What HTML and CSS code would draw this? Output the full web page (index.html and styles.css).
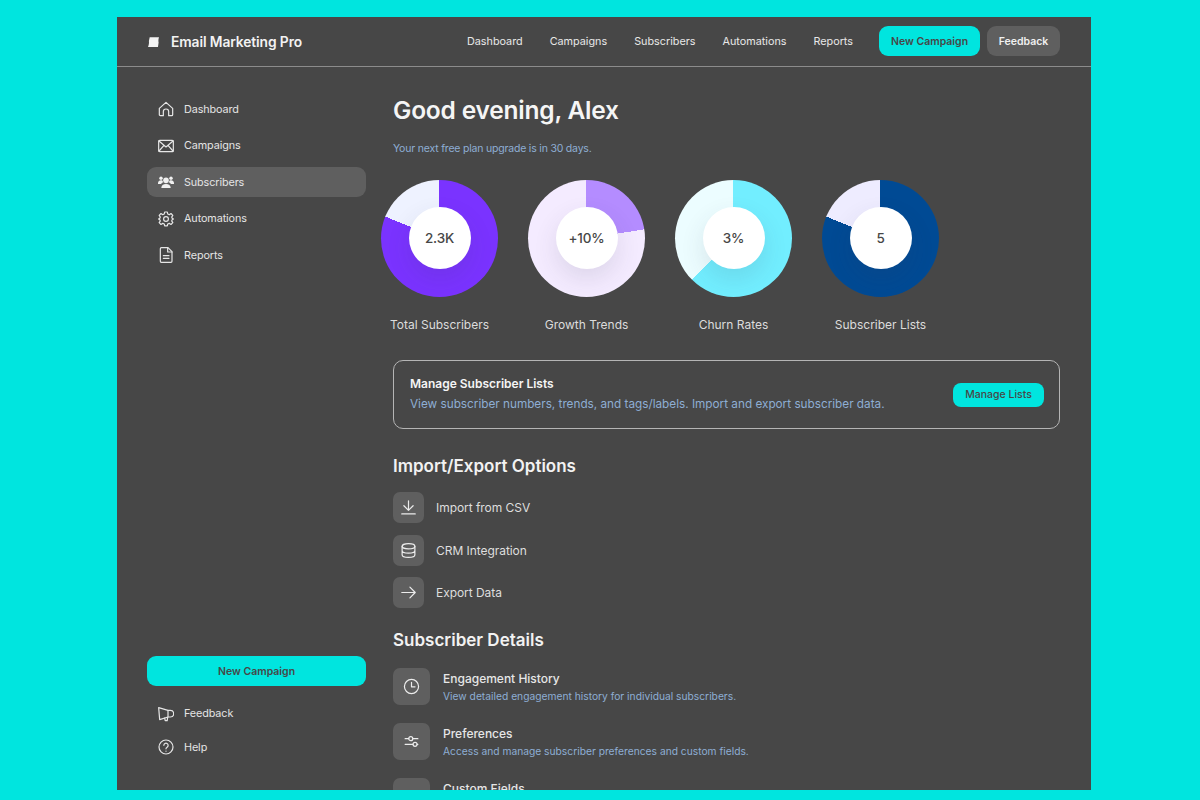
FILE: index.html
```html
<!DOCTYPE html>
<html lang="en">
<head>
<meta charset="utf-8">
<title>Email Marketing Pro</title>
<link rel="stylesheet" href="styles.css">
</head>
<body>
<div class="app">
  <header class="topbar">
    <div class="brand">
      <svg class="brand-mark" viewBox="0 0 11 10"><path d="M1.700.2H11C10.300 2 10.300 4 10.600 5.500L10 10H0C.8 8 1.200 6 .9 4z" fill="#f4f4f4"/></svg>
      <span class="brand-name">Email Marketing Pro</span>
    </div>
    <nav class="topnav">
      <a class="topnav-link">Dashboard</a>
      <a class="topnav-link">Campaigns</a>
      <a class="topnav-link">Subscribers</a>
      <a class="topnav-link">Automations</a>
      <a class="topnav-link">Reports</a>
    </nav>
    <div class="top-actions">
      <button class="btn btn-primary btn-top">New Campaign</button>
      <button class="btn btn-muted btn-top">Feedback</button>
    </div>
  </header>
  <div class="layout">
    <aside class="sidebar">
      <nav class="side-nav">
        <a class="side-link">
          <svg class="side-icon" viewBox="0 0 24 24"><path d="M2 11 12 2l10 9v9.500A1.500 1.500 0 0 1 20.500 22H16v-6a4 4 0 0 0-8 0v6H3.500A1.500 1.500 0 0 1 2 20.500z"/></svg>
          <span>Dashboard</span>
        </a>
        <a class="side-link">
          <svg class="side-icon" viewBox="0 0 24 24"><rect x="1" y="3.500" width="22" height="17" rx="1.500"/><path d="m1.500 4.500 10.500 9 10.500-9M1.500 19.500l7.500-8.500M22.500 19.500 15 11"/></svg>
          <span>Campaigns</span>
        </a>
        <a class="side-link side-link-active">
          <svg class="side-icon side-icon-fill" viewBox="0 0 24 24"><circle cx="12" cy="9.500" r="4.200"/><path d="M5 21c0-4 2.800-6 7-6s7 2 7 6z"/><circle cx="4.500" cy="6.500" r="2.600"/><circle cx="19.500" cy="6.500" r="2.600"/><path d="M0 13.500c0-2.800 2-4.300 4.500-4.300.8 0 1.500.1 2 .4.300 1.200 1 2.200 1.800 2.800-1.500.5-2.800 1.100-3.500 2.600H0zM24 13.500c0-2.800-2-4.300-4.500-4.300-.8 0-1.500.1-2 .4-.3 1.200-1 2.200-1.800 2.800 1.500.5 2.800 1.100 3.500 2.600H24z"/></svg>
          <span>Subscribers</span>
        </a>
        <a class="side-link">
          <svg class="side-icon" viewBox="0 0 24 24"><circle cx="12" cy="12" r="3.600"/><path d="M10 1.500h4l.6 3 2.300 1 2.600-1.700 2.700 2.700L20.500 9.100l1 2.300 2 .6-2 .6-1 2.300 1.700 2.600-2.700 2.700-2.600-1.700-2.300 1-.6 2.800h-4l-.6-2.800-2.300-1-2.600 1.700-2.700-2.700 1.700-2.600-1-2.300-2-.6 2-.6 1-2.300L1.800 6.500l2.700-2.700 2.600 1.700 2.300-1z"/></svg>
          <span>Automations</span>
        </a>
        <a class="side-link">
          <svg class="side-icon" viewBox="0 0 24 24"><path d="M3.500 2.500A1.500 1.500 0 0 1 5 1h10l6 6v14.500a1.500 1.500 0 0 1-1.500 1.500H5a1.500 1.500 0 0 1-1.500-1.500z"/><path d="M14.500 1v6.500H21M8 13h8.500M8 17h8.500"/></svg>
          <span>Reports</span>
        </a>
      </nav>
      <div class="side-bottom">
        <button class="btn btn-primary btn-side">New Campaign</button>
        <div class="side-help">
          <a class="side-link">
            <svg class="side-icon" viewBox="0 0 24 24"><path d="M1 2.500 15 6.500h3.500a5 5 0 0 1 0 10H15L2.500 20.500z"/><path d="M15 6.500v10M10 18l.8 4h3l.7-5"/></svg>
            <span>Feedback</span>
          </a>
          <a class="side-link">
            <svg class="side-icon" viewBox="0 0 24 24"><circle cx="12" cy="12" r="10.500"/><path d="M8.800 9.500a3.200 3.200 0 1 1 4.900 2.700c-1.100.7-1.700 1.300-1.700 2.600M12 18v.3"/></svg>
            <span>Help</span>
          </a>
        </div>
      </div>
    </aside>
    <main class="main">
      <h1 class="greeting">Good evening, Alex</h1>
      <p class="plan-note">Your next free plan upgrade is in 30 days.</p>
      <section class="stats">
        <figure class="stat">
          <div class="donut donut-total"><div class="donut-hole">2.3K</div></div>
          <figcaption class="stat-label">Total Subscribers</figcaption>
        </figure>
        <figure class="stat">
          <div class="donut donut-growth"><div class="donut-hole">+10%</div></div>
          <figcaption class="stat-label">Growth Trends</figcaption>
        </figure>
        <figure class="stat">
          <div class="donut donut-churn"><div class="donut-hole">3%</div></div>
          <figcaption class="stat-label">Churn Rates</figcaption>
        </figure>
        <figure class="stat">
          <div class="donut donut-lists"><div class="donut-hole">5</div></div>
          <figcaption class="stat-label">Subscriber Lists</figcaption>
        </figure>
      </section>
      <section class="manage-card">
        <div class="manage-text">
          <h2 class="manage-title">Manage Subscriber Lists</h2>
          <p class="manage-desc">View subscriber numbers, trends, and tags/labels. Import and export subscriber data.</p>
        </div>
        <button class="btn btn-primary btn-manage">Manage Lists</button>
      </section>
      <h2 class="section-title section-import">Import/Export Options</h2>
      <ul class="option-list">
        <li class="option">
          <span class="icon-box"><svg class="box-icon" viewBox="0 0 24 24"><path d="M12 2.500v13.500M5.500 9.500 12 16l6.500-6.500M2.500 21h19"/></svg></span>
          <span>Import from CSV</span>
        </li>
        <li class="option">
          <span class="icon-box"><svg class="box-icon" viewBox="0 0 24 24"><ellipse cx="12" cy="6" rx="9" ry="3.800"/><path d="M3 6v12c0 2.100 4 3.800 9 3.800s9-1.700 9-3.800V6M3 12c0 2.100 4 3.800 9 3.800s9-1.700 9-3.800"/></svg></span>
          <span>CRM Integration</span>
        </li>
        <li class="option">
          <span class="icon-box"><svg class="box-icon" viewBox="0 0 24 24"><path d="M2.500 12h19M14 4.500l7.500 7.500-7.500 7.500"/></svg></span>
          <span>Export Data</span>
        </li>
      </ul>
      <h2 class="section-title section-details">Subscriber Details</h2>
      <ul class="detail-list">
        <li class="detail">
          <span class="icon-box icon-box-lg"><svg class="box-icon" viewBox="0 0 24 24"><circle cx="12" cy="12" r="10"/><path d="M12 6v6.500h5"/></svg></span>
          <div>
            <h3 class="detail-title">Engagement History</h3>
            <p class="detail-desc">View detailed engagement history for individual subscribers.</p>
          </div>
        </li>
        <li class="detail">
          <span class="icon-box icon-box-lg"><svg class="box-icon" viewBox="0 0 24 24"><path d="M3 8h5M14 8h7M3 16h11M20 16h1"/><circle cx="11" cy="8" r="2.800"/><circle cx="17" cy="16" r="2.800"/></svg></span>
          <div>
            <h3 class="detail-title">Preferences</h3>
            <p class="detail-desc">Access and manage subscriber preferences and custom fields.</p>
          </div>
        </li>
        <li class="detail">
          <span class="icon-box icon-box-lg"></span>
          <div>
            <h3 class="detail-title">Custom Fields</h3>
          </div>
        </li>
      </ul>
    </main>
  </div>
</div>
</body>
</html>
```
FILE: styles.css
```css
* { box-sizing: border-box; }
html, body { height: 100%; }
body {
  margin: 0;
  height: 800px;
  overflow: hidden;
  background: #00e5df;
  padding: 17px 109px 10px 117px;
  font-family: Inter, "Liberation Sans", sans-serif;
  color: #e4e4e4;
}
h1, h2, h3, p, ul, figure { margin: 0; padding: 0; }
ul { list-style: none; }
svg { display: block; flex: none; }

.app {
  height: 773px;
  background: #474747;
  display: flex;
  flex-direction: column;
  overflow: hidden;
}

.topbar {
  height: 50px;
  flex: none;
  display: flex;
  align-items: center;
  padding: 0 31px 1px 31px;
  border-bottom: 1px solid #8c8c8c;
}
.brand { display: flex; align-items: center; gap: 12px; padding-top: 2px; }
.brand-mark { width: 11px; height: 10px; }
.brand-name { font-size: 13.800px; font-weight: 600; color: #f2f2f2; letter-spacing: -0.1px; }
.topnav { margin-left: auto; display: flex; gap: 27px; padding-top: 1px; }
.topnav-link { font-size: 10.800px; font-weight: 400; color: #e8e8e8; }
.top-actions { display: flex; gap: 7px; margin-left: 26px; }

.btn {
  border: 0;
  font-family: inherit;
  font-weight: 600;
  font-size: 10.500px;
  padding: 0;
}
.btn-primary { background: #00e5df; color: #474747; }
.btn-muted { background: #5f5f5f; color: #f0f0f0; }
.btn-top { height: 30px; border-radius: 9px; }
.btn-top.btn-primary { width: 101px; }
.btn-top.btn-muted { width: 73px; }
.btn-side { width: 100%; height: 30px; border-radius: 9px; }
.btn-manage { width: 91px; height: 24px; border-radius: 8px; font-weight: 500; flex: none; }

.layout { flex: 1; min-height: 0; display: flex; }

.sidebar {
  width: 276px;
  flex: none;
  padding: 27.300px 0 28px 30px;
  display: flex;
  flex-direction: column;
  justify-content: space-between;
}
.sidebar > * { width: 219px; }
.side-nav { display: flex; flex-direction: column; gap: 6.500px; }
.side-link {
  height: 30px;
  display: flex;
  align-items: center;
  gap: 10px;
  padding-left: 11px;
  border-radius: 9px;
  font-size: 10.800px;
  font-weight: 400;
  color: #e4e4e4;
  letter-spacing: -0.1px;
}
.side-link-active { background: #5f5f5f; }
.side-icon {
  width: 16px;
  height: 16px;
  fill: none;
  stroke: #e6e6e6;
  stroke-width: 1.800;
  stroke-linejoin: round;
  stroke-linecap: round;
}
.side-icon-fill { fill: #f0f0f0; stroke: none; }
.side-help { display: flex; flex-direction: column; gap: 3.500px; margin-top: 12.500px; }

.main { flex: 1; min-width: 0; padding: 0 31px 0 0; }
.greeting {
  font-size: 24.500px;
  font-weight: 600;
  letter-spacing: -0.2px;
  color: #f5f5f5;
  line-height: 32px;
  margin-top: 27px;
}
.plan-note { font-size: 10.500px; letter-spacing: -0.2px; color: #8eaed4; margin-top: 16px; line-height: 14px; }

.stats { display: flex; gap: 30px; margin: 23.500px 0 0 -12px; }
.stat { width: 117px; display: flex; flex-direction: column; align-items: center; }
.stat-label { font-size: 12px; color: #dcdcdc; margin-top: 20px; line-height: 15px; white-space: nowrap; }

.donut {
  width: 117px;
  height: 117px;
  border-radius: 50%;
  display: flex;
  align-items: center;
  justify-content: center;
  overflow: hidden;
}
.donut-total { background: conic-gradient(#7a33ff 0 292deg, #eef2ff 292deg 360deg); }
.donut-growth { background: conic-gradient(#b48cff 0 81deg, #f4ebff 81deg 360deg); }
.donut-churn { background: conic-gradient(#72eeff 0 225deg, #ecfdff 225deg 360deg); }
.donut-lists { background: conic-gradient(#004a94 0 292deg, #eeecff 292deg 360deg); }
.donut-hole {
  width: 62px;
  height: 62px;
  border-radius: 50%;
  background: #fff;
  box-shadow: 0 10px 24px rgba(60, 60, 80, 0.12);
  display: flex;
  align-items: center;
  justify-content: center;
  font-size: 13.500px;
  font-weight: 450;
  letter-spacing: -0.2px;
  color: #474747;
}

.manage-card {
  margin-top: 28.500px;
  height: 69px;
  border: 1px solid #b5b5b5;
  border-radius: 10px;
  display: flex;
  align-items: center;
  justify-content: space-between;
  padding: 0 15px 0 16px;
}
.manage-text { padding-bottom: 2px; }
.manage-title { font-size: 12px; font-weight: 600; color: #f5f5f5; line-height: 15px; }
.manage-desc { font-size: 11.750px; color: #8eaed4; margin-top: 6px; line-height: 15px; }

.section-title { font-size: 17px; font-weight: 600; color: #f2f2f2; line-height: 20px; }
.section-import { margin-top: 27px; }
.section-details { margin-top: 22px; }

.option-list { display: flex; flex-direction: column; gap: 11.500px; margin-top: 16px; }
.option { display: flex; align-items: center; gap: 12px; font-size: 12px; letter-spacing: -0.05px; color: #dedede; }
.icon-box {
  width: 31px;
  height: 31px;
  flex: none;
  border-radius: 7px;
  background: #5f5f5f;
  display: flex;
  align-items: center;
  justify-content: center;
}
.icon-box-lg { width: 37px; height: 37px; }
.box-icon {
  width: 17px;
  height: 17px;
  fill: none;
  stroke: #ececec;
  stroke-width: 1.700;
  stroke-linecap: round;
  stroke-linejoin: round;
}
.detail-list { display: flex; flex-direction: column; gap: 18px; margin-top: 18px; }
.detail { display: flex; gap: 13px; align-items: flex-start; }
.detail-title { font-size: 12px; font-weight: 500; color: #e6e6e6; line-height: 16px; margin-top: 2.500px; }
.detail-desc { font-size: 10.250px; color: #8eaed4; line-height: 14px; margin-top: 2.500px; }
```
